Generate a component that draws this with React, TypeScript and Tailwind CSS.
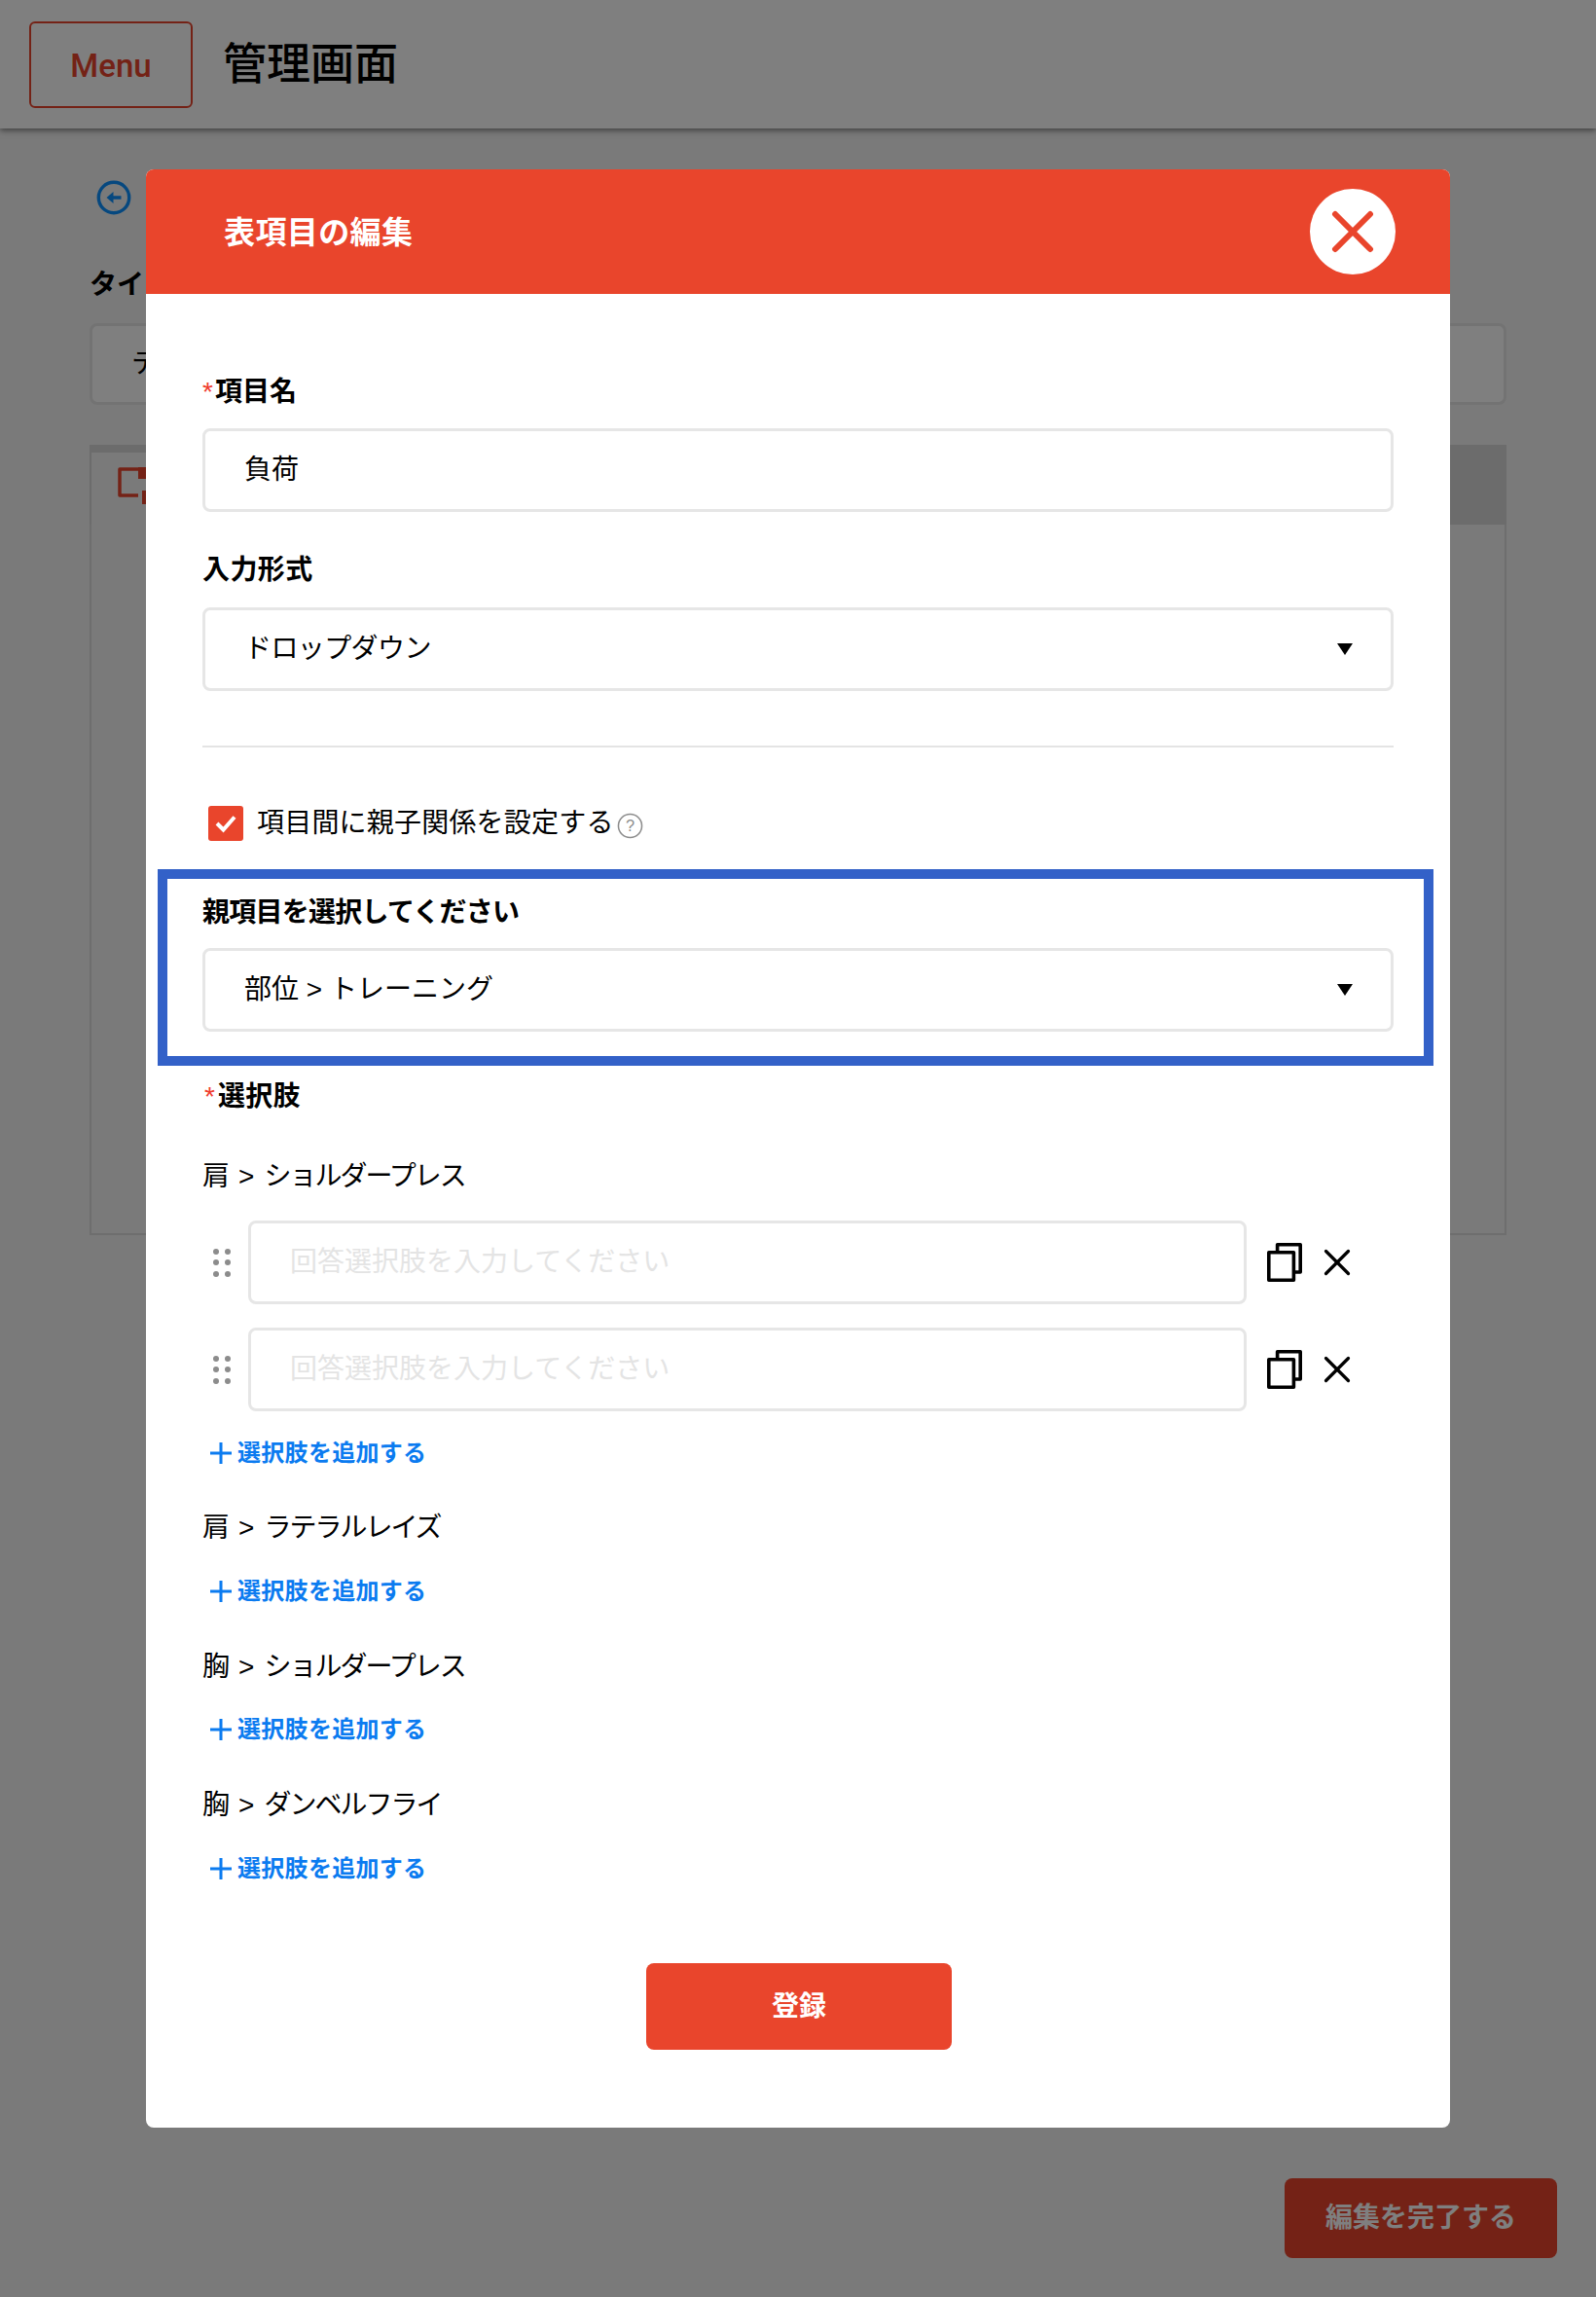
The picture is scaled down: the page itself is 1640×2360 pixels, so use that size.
import { X } from "lucide-react";

const jp = "font-['Helvetica_Neue','Liberation_Sans','Noto_Sans_CJK_JP',sans-serif]";

function Arrow() {
  return (
    <svg width="16" height="12" viewBox="0 0 16 12" className="absolute right-[39px] top-1/2 -translate-y-1/2">
      <path d="M0 0h16L8 12z" fill="#000" />
    </svg>
  );
}

function Select({ value, tight }: { value: string; tight?: boolean }) {
  return (
    <div className="relative flex h-[86px] items-center rounded-lg border-[3px] border-[#e6e6e6] pl-10 text-[28px] text-black">
      <span className={tight ? "tracking-[-0.6px]" : ""}>{value}</span>
      <Arrow />
    </div>
  );
}

function Grip() {
  const dots = [0, 1, 2, 3, 4, 5];
  return (
    <div className="grid w-[18px] grid-cols-2 gap-x-1.5 gap-y-[5.5px]">
      {dots.map((d) => (
        <span key={d} className="h-1.5 w-1.5 rounded-full bg-[#8c8c8c]" />
      ))}
    </div>
  );
}

function CopyIcon() {
  return (
    <svg width="36" height="40" viewBox="0 0 36 40" fill="none" stroke="#000" strokeWidth="3.6" strokeLinejoin="round">
      <path d="M10.6 8V1.8h23.6V30H28" />
      <rect x="1.8" y="9.7" width="25.6" height="28.5" />
    </svg>
  );
}

function ChoiceRow() {
  return (
    <div className="flex items-center">
      <div className="flex w-12 justify-center pr-[6px]">
        <Grip />
      </div>
      <div className="flex h-[86px] w-[1026px] items-center rounded-lg border-[3px] border-[#e6e6e6] pl-10 text-[28px] text-[#e4e4e4]">
        回答選択肢を入力してください
      </div>
      <div className="ml-[21px]">
        <CopyIcon />
      </div>
      <X size={46} strokeWidth={1.7} className="ml-[13px] text-black" />
    </div>
  );
}

function AddLink() {
  return (
    <div className="flex h-8 items-center pl-2 text-2xl font-bold tracking-[0.3px] text-[#0b7bf0]">
      <svg width="22" height="22" viewBox="0 0 22 22" className="mr-[6px]">
        <path d="M11 0v22M0 11h22" stroke="#0b7bf0" strokeWidth="3" />
      </svg>
      選択肢を追加する
    </div>
  );
}

function Req() {
  return <span className="inline-block w-[13px] font-normal text-[#f03c2e]">*</span>;
}

function GroupTitle({ parent, name }: { parent: string; name: string }) {
  return (
    <div className="flex h-11 items-center">
      <span>{parent}</span>
      <span className="ml-[9px] mr-[10px]">&gt;</span>
      <span className="tracking-[-2px]">{name}</span>
    </div>
  );
}

export default function App() {
  return (
    <div className={`relative h-[2360px] w-[1640px] overflow-hidden bg-[#f4f4f4] ${jp}`}>
      {/* page behind the dialog */}
      <header className="flex h-[132px] items-center bg-white pl-[30px] shadow-[0_2px_6px_rgba(0,0,0,0.5)]">
        <div className="flex h-[89px] w-[168px] items-center justify-center rounded-md border-2 border-[#e9452c] pt-1 font-['Roboto',sans-serif] text-[33px] font-medium text-[#e9452c]">
          Menu
        </div>
        <h1 className="ml-[31px] pt-[2px] text-[45px] font-medium text-black">管理画面</h1>
      </header>
      <main className="px-[92px] pt-[53px]">
        <svg width="36" height="36" viewBox="0 0 36 36" fill="none" className="ml-[7px]">
          <circle cx="18" cy="18" r="15.7" stroke="#0d90ff" strokeWidth="3.4" />
          <path d="M10.5 18l7-6v4.2h8v3.6h-8V24z" fill="#0d90ff" />
        </svg>
        <div className="mt-[51px] text-[28px] font-bold text-black">タイトル</div>
        <div className="mt-[18px] flex h-[84px] items-center rounded-lg border-[3px] border-[#e6e6e6] bg-white pl-10 text-[28px] text-black">
          テスト
        </div>
        <section className="relative mt-[41px] h-[812px] border-2 border-t-0 border-[#dcdcdc]">
          <div className="-mx-[2px] h-[82px] bg-[#d8d8d8]" />
          <div className="absolute left-0 top-2 h-[74px] w-[60px] bg-[#f4f4f4]">
            <svg width="40" height="40" viewBox="0 0 40 40" className="absolute left-[26px] top-[15px]">
              <path d="M30 2H3v27h19" fill="none" stroke="#e9452c" strokeWidth="3.5" strokeLinejoin="round" />
              <path d="M22 0h14v12H22zM26 24h5v4h4v6h-4v4h-5z" fill="#e9452c" />
            </svg>
          </div>
        </section>
      </main>
      <div className="absolute right-10 top-[2238px] flex h-[82px] w-[280px] items-center justify-center rounded-lg bg-[#e9452c] text-[28px] font-bold text-white">
        編集を完了する
      </div>

      {/* dialog */}
      <div className="absolute inset-0 bg-black/50">
        <div className="absolute left-[150px] top-[174px] h-[2012px] w-[1340px] overflow-hidden rounded-lg bg-white">
          <div className="flex h-[128px] items-center justify-between bg-[#e9452c] pl-[80px] pr-[56px]">
            <span className="pt-[1px] text-[32px] font-bold tracking-[0.4px] text-white">表項目の編集</span>
            <span className="flex h-[88px] w-[88px] items-center justify-center rounded-full bg-white">
              <X size={72} strokeWidth={2} className="shrink-0 text-[#e9452c]" />
            </span>
          </div>
          <div className="px-[58px] pt-[79px] text-[28px] text-black">
            <div className="h-11 font-bold leading-[44px]"><Req />項目名</div>
            <div className="mt-[15px] flex h-[86px] items-center rounded-lg border-[3px] border-[#e6e6e6] pl-10">負荷</div>
            <div className="mt-[38px] h-11 font-bold leading-[44px] tracking-[0.4px]">入力形式</div>
            <div className="mt-4"><Select value="ドロップダウン" tight /></div>
            <div className="mt-[56px] h-[2px] bg-[#e4e4e4]" />
            <div className="mt-[57px] flex items-center pl-1.5">
              <span className="flex h-9 w-9 items-center justify-center rounded-[3px] bg-[#e9452c]">
                <svg width="24" height="20" viewBox="0 0 24 20" fill="none">
                  <path d="M3 10l6.5 6.5L21 3.5" stroke="#fff" strokeWidth="4" />
                </svg>
              </span>
              <span className="ml-[14px] tracking-[0.2px]">項目間に親子関係を設定する</span>
              <svg width="27" height="27" viewBox="0 0 28 28" fill="none" className="ml-[3px] mt-1">
                <circle cx="14" cy="14" r="12.5" stroke="#8c8c8c" strokeWidth="1.6" />
                <text x="14" y="20" textAnchor="middle" fontSize="17" fill="#8c8c8c">?</text>
              </svg>
            </div>
            <div className="mt-[49px] h-11 font-bold leading-[44px] tracking-[-0.75px]">親項目を選択してください</div>
            <div className="mt-[14px]"><Select value="部位 > トレーニング" /></div>
            <div className="mt-[45px] flex h-11 items-center font-bold">
              <span className="inline-block w-[16px] pl-[2px] font-normal text-[#f03c2e]">*</span>
              <span className="tracking-[0.3px]">選択肢</span>
            </div>
            <div className="mt-[38px]"><GroupTitle parent="肩" name="ショルダープレス" /></div>
            <div className="mt-[23px] -ml-[1px] flex flex-col gap-6">
              <ChoiceRow />
              <ChoiceRow />
            </div>
            <div className="mt-[27px]"><AddLink /></div>
            <div className="mt-[39px]"><GroupTitle parent="肩" name="ラテラルレイズ" /></div>
            <div className="mt-[27px]"><AddLink /></div>
            <div className="mt-[40px]"><GroupTitle parent="胸" name="ショルダープレス" /></div>
            <div className="mt-[26px]"><AddLink /></div>
            <div className="mt-[40px]"><GroupTitle parent="胸" name="ダンベルフライ" /></div>
            <div className="mt-[27px]"><AddLink /></div>
            <div className="mt-[81px] flex justify-center pl-[2px]">
              <div className="flex h-[89px] w-[314px] items-center justify-center rounded-lg bg-[#e9452c] font-bold text-white">登録</div>
            </div>
          </div>
        </div>
        {/* highlight annotation */}
        <div className="absolute left-[162px] top-[893px] h-[202px] w-[1311px] border-[10px] border-[#3361c8]" />
      </div>
    </div>
  );
}
